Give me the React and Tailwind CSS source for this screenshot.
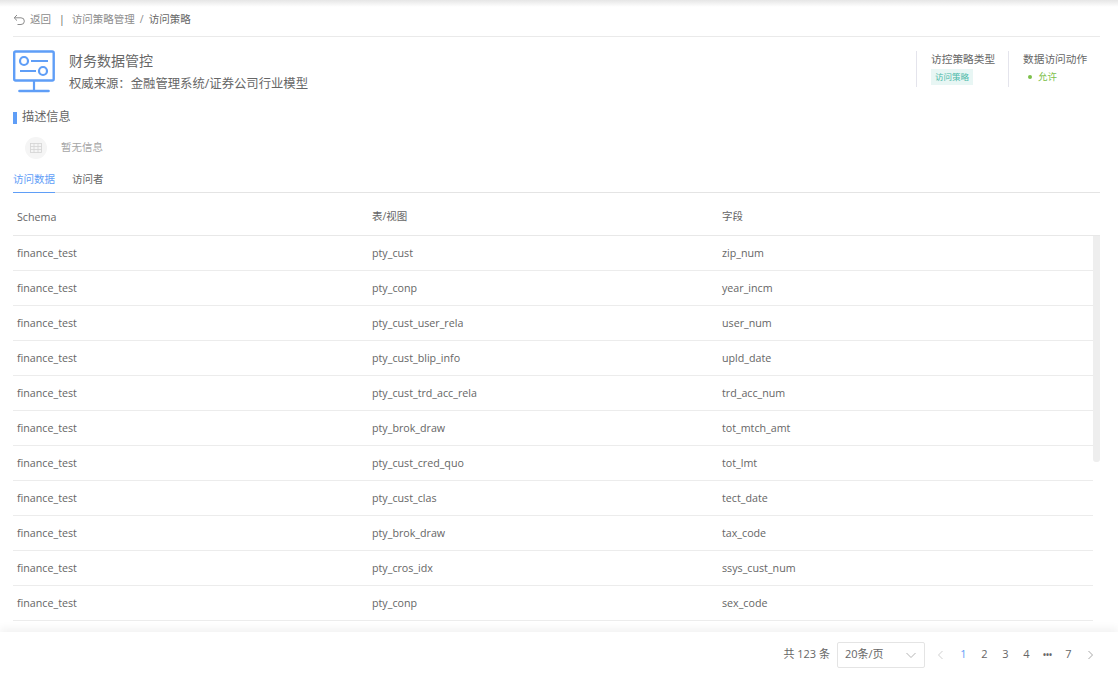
const rows = [
  ["pty_cust", "zip_num"],
  ["pty_conp", "year_incm"],
  ["pty_cust_user_rela", "user_num"],
  ["pty_cust_blip_info", "upld_date"],
  ["pty_cust_trd_acc_rela", "trd_acc_num"],
  ["pty_brok_draw", "tot_mtch_amt"],
  ["pty_cust_cred_quo", "tot_lmt"],
  ["pty_cust_clas", "tect_date"],
  ["pty_brok_draw", "tax_code"],
  ["pty_cros_idx", "ssys_cust_num"],
  ["pty_conp", "sex_code"],
];

const font = { fontFamily: '"Open Sans", "Noto Sans CJK SC", sans-serif' };

export default function App() {
  return (
    <div className="h-[677px] w-[1118px] overflow-hidden bg-white flex flex-col text-[#666] text-[10.7px]" style={font}>
      <div className="h-[7px] shrink-0 bg-gradient-to-b from-[#e6e6e6] to-white" />
      <div className="flex-1 min-h-0 overflow-hidden px-[13px] pr-[18px] flex flex-col">
        <div className="h-[30px] shrink-0 border-b border-[#eaeaea] flex items-center pb-[3px] text-[10.5px]">
          <svg width="13" height="13" viewBox="0 0 13 13" fill="none" stroke="#8c8c8c" strokeWidth="1" className="mr-[4px]">
            <path d="M4 1 1.2 3.8 4 6.6M1.2 3.8H8a3.3 3.3 0 0 1 0 6.7H4.5" />
          </svg>
          <span className="text-[#8c8c8c]">返回</span>
          <span className="ml-[8px] mr-[7px] text-[#666]">|</span>
          <span className="text-[#8c8c8c]">访问策略管理</span>
          <span className="mx-[5px] text-[#8c8c8c]">/</span>
          <span className="text-[#666]">访问策略</span>
        </div>

        <div className="flex shrink-0 pt-[13px] h-[71px]">
          <svg width="42" height="44" viewBox="0 0 42 44" fill="none" stroke="#5f9ef7" className="shrink-0">
            <rect x="1.2" y="1.5" width="39.5" height="29" rx="1.5" strokeWidth="2.4" />
            <circle cx="11" cy="11" r="4" strokeWidth="2.2" />
            <path d="M18 11H35M7 21H23" strokeWidth="2.2" />
            <circle cx="30" cy="21" r="4" strokeWidth="2.2" />
            <path d="M21 31v9.5" strokeWidth="2.2" />
            <path d="M6.5 41h29" strokeWidth="2.6" strokeLinecap="round" />
          </svg>
          <div className="ml-[14px] flex flex-col mt-[-1px]">
            <div className="text-[14px] leading-[24px] text-[#666]">财务数据管控</div>
            <div className="text-[12.35px] leading-[20px] mt-[1px] text-[#666]">权威来源：金融管理系统/证券公司行业模型</div>
          </div>
          <div className="ml-auto flex h-[36px] mt-[1px]">
            <div className="border-l border-[#e4e4ec] pl-[14px] w-[92px]">
              <div className="text-[10.7px] leading-[15px] mt-[1px] text-[#666]">访控策略类型</div>
              <div className="mt-[2px] w-[42px] h-[16px] bg-[#e8f6f4] text-[#49b9a8] text-[8.5px] leading-[16px] text-center">访问策略</div>
            </div>
            <div className="border-l border-[#e4e4ec] pl-[14px] w-[92px]">
              <div className="text-[10.7px] leading-[15px] mt-[1px] text-[#666]">数据访问动作</div>
              <div className="mt-[2px] h-[16px] flex items-center text-[#7cc04a] text-[9.5px]">
                <span className="w-[4px] h-[4px] rounded-full bg-[#7cc04a] ml-[5px] mr-[6px]" />
                允许
              </div>
            </div>
          </div>
        </div>

        <div className="shrink-0 h-[17px] flex items-center gap-[5px] mt-[1px]">
          <span className="w-[4px] h-[12px] bg-[#5f9ef7]" />
          <span className="text-[12.2px] text-[#666]">描述信息</span>
        </div>
        <div className="shrink-0 h-[24px] mt-[10px] flex items-center pl-[12px]">
          <span className="w-[22px] h-[22px] rounded-full bg-[#f5f5f5] flex items-center justify-center">
            <svg width="12" height="10" viewBox="0 0 12 10" fill="none" stroke="#d4d4d4" strokeWidth="0.8">
              <rect x="0.5" y="0.5" width="11" height="9" />
              <path d="M0.5 3.5h11M0.5 6.5h11M4 0.5v9M8 0.5v9" />
            </svg>
          </span>
          <span className="ml-[14px] text-[10.5px] text-[#a6a6a6]">暂无信息</span>
        </div>

        <div className="shrink-0 flex h-[22px] mt-[11px] border-b border-[#e4e4e4] text-[10.5px]">
          <div className="w-[42px] h-[22px] border-b border-[#5f9ef7] text-[#5f9ef7] leading-[17px]">访问数据</div>
          <div className="ml-[17px] leading-[17px] text-[#666]">访问者</div>
        </div>

        <div className="shrink-0 h-[43px] pt-[6px] flex items-center border-b border-[#e8e8e8] text-[#666]">
          <div className="w-[355px] pl-[4px]">Schema</div>
          <div className="w-[350px] pl-[4px] text-[10.5px]">表/视图</div>
          <div className="pl-[4px] text-[10.5px]">字段</div>
        </div>

        <div className="relative flex-1 min-h-0 overflow-hidden">
          {rows.map((r, i) => (
            <div key={i} className="h-[35px] flex items-center border-b border-[#ececec] mr-[7px] text-[#666]">
              <div className="w-[355px] pl-[4px]">finance_test</div>
              <div className="w-[350px] pl-[4px]">{r[0]}</div>
              <div className="pl-[4px]">{r[1]}</div>
            </div>
          ))}
          <div className="absolute right-0 top-0 w-[7px] h-[226px] bg-[#eeeeee] rounded-b-[3px]" />
        </div>
      </div>

      <div className="relative shrink-0 h-[45px] bg-white flex items-center justify-end pr-[24px] shadow-[0_-4px_8px_rgba(0,0,0,0.05)] text-[11px] text-[#666]">
        <span>共 123 条</span>
        <div className="ml-[7px] w-[88px] h-[26px] border border-[#e4e4e4] rounded-[2px] flex items-center justify-between pl-[7px] pr-[7px]">
          <span className="text-[11px]">20条/页</span>
          <svg width="12" height="12" viewBox="0 0 12 12" fill="none" stroke="#b5b5b5" strokeWidth="1"><path d="M1.5 4 6 8.5 10.5 4" /></svg>
        </div>
        <svg width="8" height="10" viewBox="0 0 8 10" fill="none" stroke="#d0d0d0" strokeWidth="1" className="ml-[12px]"><path d="M5.5 1 1.5 5l4 4" /></svg>
        <span className="w-[21px] ml-[8px] text-center text-[#5f9ef7]">1</span>
        <span className="w-[21px] text-center">2</span>
        <span className="w-[21px] text-center">3</span>
        <span className="w-[21px] text-center">4</span>
        <span className="w-[21px] text-center font-bold text-[8px] leading-none">•••</span>
        <span className="w-[21px] text-center">7</span>
        <svg width="8" height="10" viewBox="0 0 8 10" fill="none" stroke="#a8a8a8" strokeWidth="1" className="ml-[7px]"><path d="M2.5 1l4 4-4 4" /></svg>
      </div>
    </div>
  );
}
